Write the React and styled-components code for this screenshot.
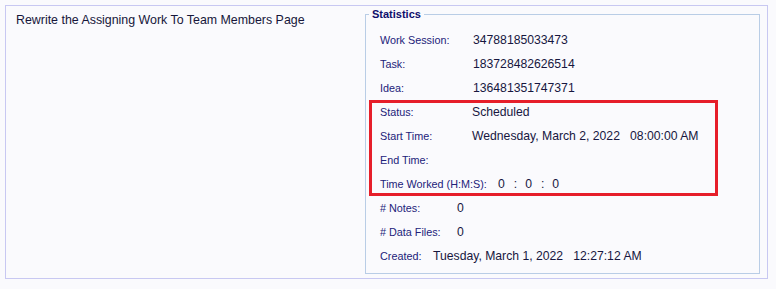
import React from "react";
import styled, { createGlobalStyle } from "styled-components";

const GlobalStyle = createGlobalStyle`
  body {
    margin: 0;
    background: #fafafd;
    font-family: "Liberation Sans", Arial, sans-serif;
  }
`;

const Page = styled.div`
  padding: 5px;
`;

const Outer = styled.div`
  width: 763px;
  box-sizing: border-box;
  border: 1px solid #c8c8f2;
  display: grid;
  grid-template-columns: 359px 395px;
  padding: 1px 7px 4px 0;
`;

const Title = styled.div`
  padding: 6px 0 0 10px;
  font-size: 12.4px;
  line-height: 15px;
  color: #16163a;
`;

const Stats = styled.fieldset`
  margin: 0;
  padding: 7px 0 5px 0;
  border: 1px solid #b9cde6;
  min-width: 0;
`;

const Legend = styled.legend`
  margin-left: 3px;
  padding: 0 3px;
  font-size: 11px;
  line-height: 14px;
  font-weight: bold;
  color: #0e0e6c;
`;

const Group = styled.div`
  padding-left: 14px;
`;

const Highlight = styled.div`
  position: relative;
  margin-left: 3px;
  width: 349px;
  box-sizing: border-box;
  padding-left: 11px;

  &::after {
    content: "";
    position: absolute;
    inset: 0;
    border: 3px solid #e61e2a;
    pointer-events: none;
  }
`;

const Row = styled.div`
  display: flex;
  align-items: center;
  height: 24px;
  white-space: pre;
`;

const Label = styled.span`
  font-size: 10.8px;
  color: #22227a;
  width: ${(p) => (p.$w ? `${p.$w}px` : "auto")};
  flex-shrink: 0;
`;

const Value = styled.span`
  font-size: 12.2px;
  color: #17173f;
`;

const Sep = styled.span`
  font-size: 12.2px;
  color: #17173f;
  margin: 0 8px 0 9px;
`;

const StatRow = ({ label, value, w }) => (
  <Row>
    <Label $w={w}>{label}</Label>
    <Value>{value}</Value>
  </Row>
);

export default function App() {
  return (
    <Page>
      <GlobalStyle />
      <Outer>
        <Title>Rewrite the Assigning Work To Team Members Page</Title>
        <Stats>
          <Legend>Statistics</Legend>
          <Group>
            <StatRow w={93} label="Work Session:" value="34788185033473" />
            <StatRow w={93} label="Task:" value="183728482626514" />
            <StatRow w={93} label="Idea:" value="136481351747371" />
          </Group>
          <Highlight>
            <StatRow w={92} label="Status:" value="Scheduled" />
            <StatRow
              w={92}
              label="Start Time:"
              value={"Wednesday, March 2, 2022   08:00:00 AM"}
            />
            <StatRow w={92} label="End Time:" value="" />
            <Row>
              <Label $w={118}>Time Worked (H:M:S):</Label>
              <Value>0</Value>
              <Sep>:</Sep>
              <Value>0</Value>
              <Sep>:</Sep>
              <Value>0</Value>
            </Row>
          </Highlight>
          <Group>
            <StatRow w={77} label="# Notes:" value="0" />
            <StatRow w={77} label="# Data Files:" value="0" />
            <StatRow
              w={53}
              label="Created:"
              value={"Tuesday, March 1, 2022   12:27:12 AM"}
            />
          </Group>
        </Stats>
      </Outer>
    </Page>
  );
}
